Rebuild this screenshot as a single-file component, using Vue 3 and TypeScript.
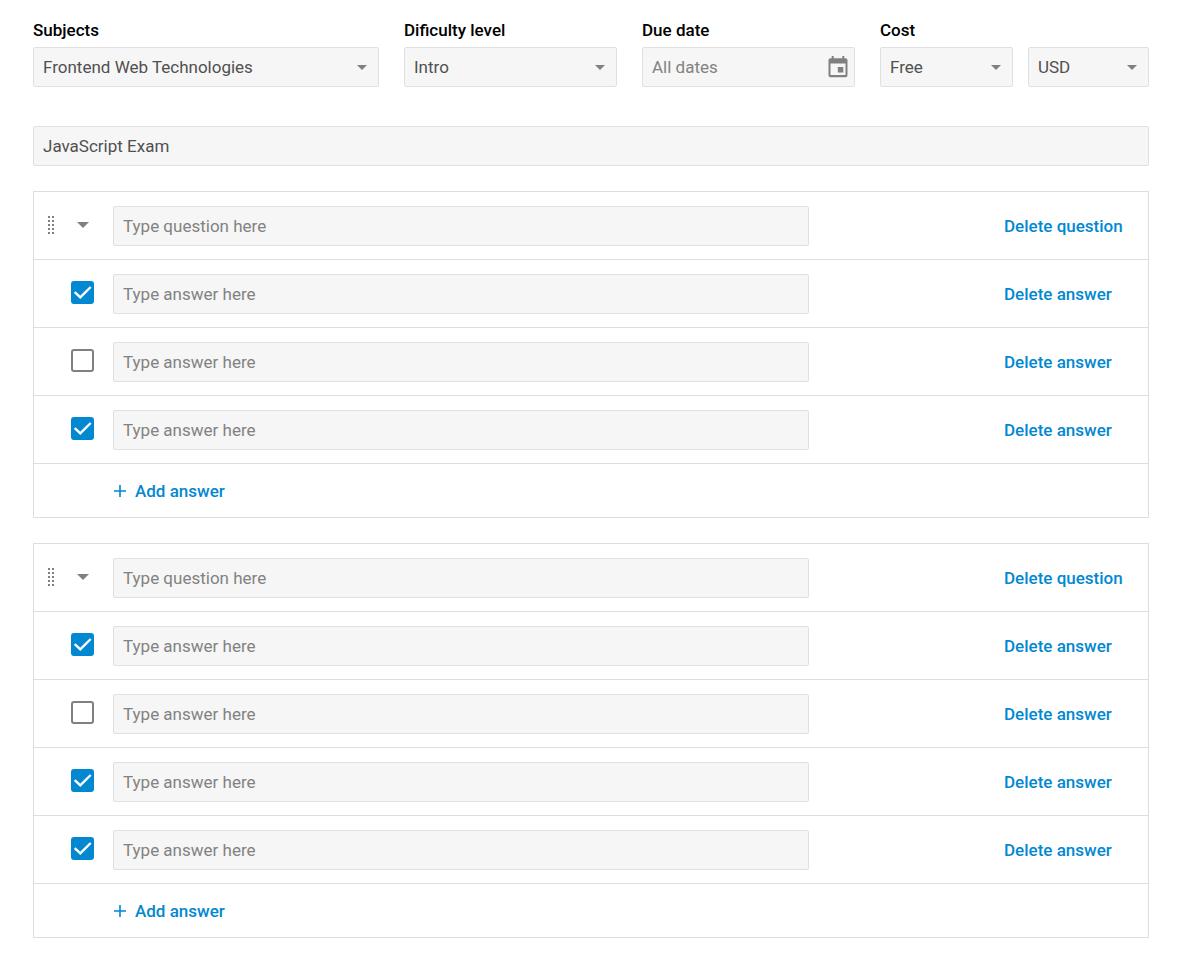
<script setup lang="ts">
import { reactive, ref } from 'vue'

interface Answer {
  id: number
  text: string
  correct: boolean
}

interface Question {
  id: number
  text: string
  answers: Answer[]
}

let nextId = 1

function makeAnswer(correct = false): Answer {
  return { id: nextId++, text: '', correct }
}

function makeQuestion(marks: boolean[]): Question {
  return { id: nextId++, text: '', answers: marks.map((mark) => makeAnswer(mark)) }
}

const subject = ref('Frontend Web Technologies')
const level = ref('Intro')
const dueDate = ref('')
const cost = ref('Free')
const currency = ref('USD')
const title = ref('JavaScript Exam')

const questions = reactive<Question[]>([
  makeQuestion([true, false, true]),
  makeQuestion([true, false, true, true]),
])

function removeQuestion(index: number) {
  questions.splice(index, 1)
}

function removeAnswer(question: Question, index: number) {
  question.answers.splice(index, 1)
}
</script>

<template>
  <main class="exam">
    <div class="filters">
      <div class="field">
        <label class="label" for="subject">Subjects</label>
        <div class="control">
          <select id="subject" v-model="subject" class="box">
            <option>Frontend Web Technologies</option>
          </select>
          <svg class="arrow" viewBox="0 0 10 5" aria-hidden="true"><path d="M0 0h10L5 5z" /></svg>
        </div>
      </div>

      <div class="field">
        <label class="label" for="level">Dificulty level</label>
        <div class="control">
          <select id="level" v-model="level" class="box">
            <option>Intro</option>
          </select>
          <svg class="arrow" viewBox="0 0 10 5" aria-hidden="true"><path d="M0 0h10L5 5z" /></svg>
        </div>
      </div>

      <div class="field">
        <label class="label" for="due">Due date</label>
        <div class="control">
          <input id="due" v-model="dueDate" class="box" type="text" placeholder="All dates" />
          <svg class="calendar" viewBox="0 0 20 22" aria-hidden="true">
            <path
              fill-rule="evenodd"
              d="M3.700 0h2v2.300h8.600V0h2v2.300h1.200a2 2 0 0 1 2 2V19.300a2 2 0 0 1-2 2h-15a2 2 0 0 1-2-2V4.300a2 2 0 0 1 2-2h1.200zM2.500 7.500v11.500h15V7.500zM9.800 11h5.500v5.500H9.800z"
            />
          </svg>
        </div>
      </div>

      <div class="field">
        <label class="label" for="cost">Cost</label>
        <div class="pair">
          <div class="control">
            <select id="cost" v-model="cost" class="box">
              <option>Free</option>
            </select>
            <svg class="arrow" viewBox="0 0 10 5" aria-hidden="true"><path d="M0 0h10L5 5z" /></svg>
          </div>
          <div class="control">
            <select v-model="currency" class="box" aria-label="Currency">
              <option>USD</option>
            </select>
            <svg class="arrow" viewBox="0 0 10 5" aria-hidden="true"><path d="M0 0h10L5 5z" /></svg>
          </div>
        </div>
      </div>
    </div>

    <input v-model="title" class="box title" type="text" aria-label="Exam title" />

    <section v-for="(question, q) in questions" :key="question.id" class="card">
      <div class="row">
        <div class="lead">
          <svg class="grip" viewBox="0 0 8 20" aria-hidden="true">
            <template v-for="n in 5" :key="n">
              <rect x="1" :y="n * 4 - 3" width="2" height="2" />
              <rect x="5" :y="n * 4 - 3" width="2" height="2" />
            </template>
          </svg>
          <button class="toggle" type="button" aria-label="Collapse question">
            <svg viewBox="0 0 12 6" aria-hidden="true"><path d="M0 0h12L6 6z" /></svg>
          </button>
        </div>
        <input
          v-model="question.text"
          class="box"
          type="text"
          placeholder="Type question here"
          aria-label="Question"
        />
        <div class="action">
          <button class="link" type="button" @click="removeQuestion(q)">Delete question</button>
        </div>
      </div>

      <div v-for="(answer, a) in question.answers" :key="answer.id" class="row">
        <div class="lead">
          <span class="check">
            <input v-model="answer.correct" type="checkbox" aria-label="Correct answer" />
            <svg v-if="answer.correct" viewBox="0 0 23 23" aria-hidden="true">
              <path d="M3.700 11.200l5.600 5.200L19.700 6" />
            </svg>
          </span>
        </div>
        <input
          v-model="answer.text"
          class="box"
          type="text"
          placeholder="Type answer here"
          aria-label="Answer"
        />
        <div class="action">
          <button class="link" type="button" @click="removeAnswer(question, a)">Delete answer</button>
        </div>
      </div>

      <div class="footer">
        <button class="link add" type="button" @click="question.answers.push(makeAnswer())">
          <svg viewBox="0 0 12 12" aria-hidden="true"><path d="M6 0v12M0 6h12" /></svg>
          Add answer
        </button>
      </div>
    </section>
  </main>
</template>

<style>
body {
  margin: 0;
  background: #fff;
}
</style>

<style scoped>
.exam {
  display: flex;
  flex-direction: column;
  padding: 20px 31px 36px 33px;
  font-family: Roboto, 'Liberation Sans', sans-serif;
  font-size: 17px;
  line-height: 20px;
  color: #000;
}

.filters {
  display: grid;
  grid-template-columns: 346fr 213fr 213fr 269fr;
  gap: 25px;
}

.field {
  display: flex;
  flex-direction: column;
  gap: 7px;
  min-width: 0;
}

.label {
  font-weight: 500;
}

.pair {
  display: grid;
  grid-template-columns: 133fr 121fr;
  gap: 15px;
}

.control {
  display: grid;
  align-items: center;
  min-width: 0;
}

.control > * {
  grid-area: 1 / 1;
}

.box {
  box-sizing: border-box;
  width: 100%;
  min-width: 0;
  height: 40px;
  margin: 0;
  padding: 0 9px;
  appearance: none;
  border: 1px solid #e0e0e0;
  border-radius: 2px;
  background: #f6f6f6;
  color: #505050;
  font: inherit;
}

.box::placeholder {
  color: #828282;
  opacity: 1;
}

.arrow {
  justify-self: end;
  width: 10px;
  height: 5px;
  margin-right: 12px;
  fill: #808080;
  pointer-events: none;
}

.calendar {
  justify-self: end;
  width: 20px;
  height: 22px;
  margin-right: 7px;
  fill: #808080;
  pointer-events: none;
}

.title {
  margin-top: 39px;
}

.card {
  margin-top: 25px;
  border: 1px solid #dedede;
}

.row {
  display: grid;
  grid-template-columns: 79px 696fr 339fr;
  align-items: center;
  padding: 14px 0 13px;
  border-bottom: 1px solid #dedede;
}

.lead {
  display: flex;
  align-items: center;
  justify-content: flex-end;
  padding: 0 19px 3px 0;
}

.grip {
  width: 8px;
  height: 20px;
  margin-right: 16px;
  fill: #808080;
}

.toggle {
  display: grid;
  place-items: center;
  width: 23px;
  height: 23px;
  padding: 0;
  border: 0;
  background: none;
  cursor: pointer;
}

.toggle svg {
  width: 12px;
  height: 6px;
  fill: #808080;
}

.check {
  display: grid;
}

.check > * {
  grid-area: 1 / 1;
  width: 23px;
  height: 23px;
}

.check input {
  box-sizing: border-box;
  margin: 0;
  appearance: none;
  border: 2px solid #808080;
  border-radius: 3px;
  background: #fff;
}

.check input:checked {
  border-color: #0288d1;
  background: #0288d1;
}

.check svg {
  fill: none;
  stroke: #fff;
  stroke-width: 2.4;
  pointer-events: none;
}

.action {
  padding-left: 195px;
}

.link {
  padding: 0;
  border: 0;
  background: none;
  color: #0288d1;
  font: inherit;
  font-weight: 500;
  white-space: nowrap;
  cursor: pointer;
}

.footer {
  display: flex;
  padding: 17px 0 16px 80px;
}

.add {
  display: flex;
  align-items: center;
  gap: 9px;
}

.add svg {
  width: 12px;
  height: 12px;
  fill: none;
  stroke: #0288d1;
  stroke-width: 1.6;
}
</style>
